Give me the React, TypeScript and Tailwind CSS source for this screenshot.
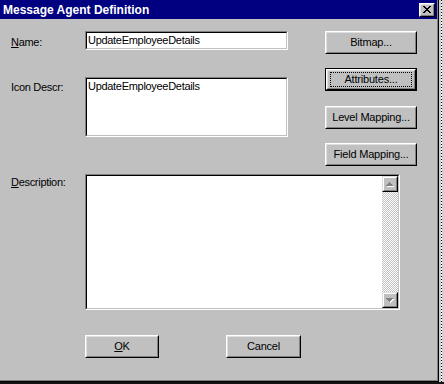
// Message Agent Definition — Win95 style dialog

import type { ReactNode } from 'react';

const uiFont = "font-['Liberation_Sans',Arial,sans-serif]";

function Sunken({ className, children }: { className: string; children?: ReactNode }): JSX.Element {
  return (
    <div className={`border border-t-[#808080] border-l-[#808080] border-b-white border-r-white ${className}`}>
      <div className="h-full w-full border border-t-black border-l-black border-b-[#c0c0c0] border-r-[#c0c0c0] bg-white">
        {children}
      </div>
    </div>
  );
}

function Bevel({ children }: { children?: ReactNode }): JSX.Element {
  return (
    <div className="flex h-full w-full border border-t-white border-l-white border-b-black border-r-black">
      <div className="flex h-full w-full items-center justify-center border border-t-[#dfdfdf] border-l-[#dfdfdf] border-b-[#808080] border-r-[#808080] bg-[#c0c0c0]">
        {children}
      </div>
    </div>
  );
}

function Button({ className, children }: { className: string; children: ReactNode }): JSX.Element {
  return (
    <div className={`shrink-0 text-[11px] leading-[13px] tracking-[-0.2px] text-black ${className}`}>
      <Bevel>{children}</Bevel>
    </div>
  );
}

function DefaultButton({ className, children }: { className: string; children: ReactNode }): JSX.Element {
  return (
    <div className={`shrink-0 border border-black text-[11px] leading-[13px] tracking-[-0.2px] text-black ${className}`}>
      <Bevel>
        <div className="flex h-[15px] w-[82px] items-center justify-center border border-dotted border-black">
          {children}
        </div>
      </Bevel>
    </div>
  );
}

function CloseGlyph(): JSX.Element {
  return (
    <svg width="8" height="7" viewBox="0 0 8 7" shapeRendering="crispEdges" aria-hidden="true">
      <path
        fill="#000"
        d="M0 0h2v1H0zM6 0h2v1H6zM1 1h2v1H1zM5 1h2v1H5zM2 2h4v1H2zM3 3h2v1H3zM2 4h4v1H2zM1 5h2v1H1zM5 5h2v1H5zM0 6h2v1H0zM6 6h2v1H6z"
      />
    </svg>
  );
}

function ArrowGlyph({ down }: { down?: boolean }): JSX.Element {
  const up = 'M3 0h1v1H3zM2 1h3v1H2zM1 2h5v1H1zM0 3h7v1H0z';
  const dn = 'M0 0h7v1H0zM1 1h5v1H1zM2 2h3v1H2zM3 3h1v1H3z';
  return (
    <svg width="8" height="5" viewBox="0 0 8 5" shapeRendering="crispEdges" aria-hidden="true">
      <path fill="#fff" transform="translate(1 1)" d={down ? dn : up} />
      <path fill="#808080" d={down ? dn : up} />
    </svg>
  );
}

function ScrollButton({ down }: { down?: boolean }): JSX.Element {
  return (
    <div className="flex h-[16px] w-[16px] shrink-0 border border-t-[#dfdfdf] border-l-[#dfdfdf] border-b-black border-r-black">
      <div className="flex h-full w-full items-center justify-center border border-t-white border-l-white border-b-[#808080] border-r-[#808080] bg-[#c0c0c0]">
        <ArrowGlyph down={down} />
      </div>
    </div>
  );
}

export default function App(): JSX.Element {
  return (
    <div className={`flex h-[384px] w-[444px] items-start overflow-hidden bg-[#141414] ${uiFont}`}>
      {/* Dialog */}
      <div className="h-[382px] w-[439px] shrink-0 border-r border-b border-black">
        <div className="flex h-full w-full flex-col border-r border-b border-[#808080] bg-[#c0c0c0]">
          {/* Title bar */}
          <div className="flex h-[19px] shrink-0 items-center bg-[#000080] pl-[3px] pr-[2px]">
            <div className="flex-1 text-[12px] font-bold leading-[14px] text-white">Message Agent Definition</div>
            <div className="h-[14px] w-[16px]">
              <Bevel>
                <CloseGlyph />
              </Bevel>
            </div>
          </div>

          {/* Top section */}
          <div className="flex items-start pt-[12px] pl-[11px]">
            <div className="flex w-[277px] flex-col">
              <div className="flex h-[19px]">
                <div className="w-[74px] pt-[5px] text-[11px] leading-[13px] tracking-[-0.3px] text-black">
                  <u className="underline-offset-1">N</u>ame:
                </div>
                <Sunken className="h-[19px] w-[203px]">
                  <div className="pl-[1px] pt-[1px] text-[11px] leading-[13px] tracking-[-0.3px] text-black">
                    UpdateEmployeeDetails
                  </div>
                </Sunken>
              </div>
              <div className="mt-[27px] flex">
                <div className="w-[74px] pt-[4px] text-[11px] leading-[13px] tracking-[-0.3px] text-black">
                  Icon Descr:
                </div>
                <Sunken className="h-[60px] w-[203px]">
                  <div className="pl-[1px] pt-[1px] text-[11px] leading-[13px] tracking-[-0.3px] text-black">
                    UpdateEmployeeDetails
                  </div>
                </Sunken>
              </div>
            </div>

            <div className="ml-[37px] flex w-[92px] flex-col">
              <Button className="h-[23px] w-[92px]">Bitmap...</Button>
              <DefaultButton className="mt-[14px] h-[23px] w-[92px]">Attributes...</DefaultButton>
              <Button className="mt-[15px] h-[23px] w-[92px]">Level Mapping...</Button>
              <Button className="mt-[14px] h-[23px] w-[92px]">Field Mapping...</Button>
            </div>
          </div>

          {/* Description */}
          <div className="mt-[8px] flex pl-[11px]">
            <div className="w-[74px] pt-[2px] text-[11px] leading-[13px] tracking-[-0.3px] text-black">
              <u className="underline-offset-1">D</u>escription:
            </div>
            <Sunken className="h-[136px] w-[315px]">
              <div className="flex h-full justify-end">
                <div className="flex h-full w-[16px] flex-col">
                  <ScrollButton />
                  <div className="flex-1 bg-[repeating-conic-gradient(#c0c0c0_0_25%,#ffffff_0_50%)] bg-[length:2px_2px]" />
                  <ScrollButton down />
                </div>
              </div>
            </Sunken>
          </div>

          {/* OK / Cancel */}
          <div className="mt-[25px] flex pl-[85px]">
            <Button className="h-[23px] w-[74px]">
              <span>
                <u className="underline-offset-1">O</u>K
              </span>
            </Button>
            <Button className="ml-[67px] h-[23px] w-[75px]">Cancel</Button>
          </div>
        </div>
      </div>

      {/* Background showing at the right edge */}
      <div className="flex h-[382px] w-[5px] shrink-0 bg-[#cfcfcf] pl-[2px]">
        <div className="h-full w-[1px] bg-[repeating-linear-gradient(to_bottom,#000_0_1px,#ffffff_1px_3px)]" />
      </div>
    </div>
  );
}
